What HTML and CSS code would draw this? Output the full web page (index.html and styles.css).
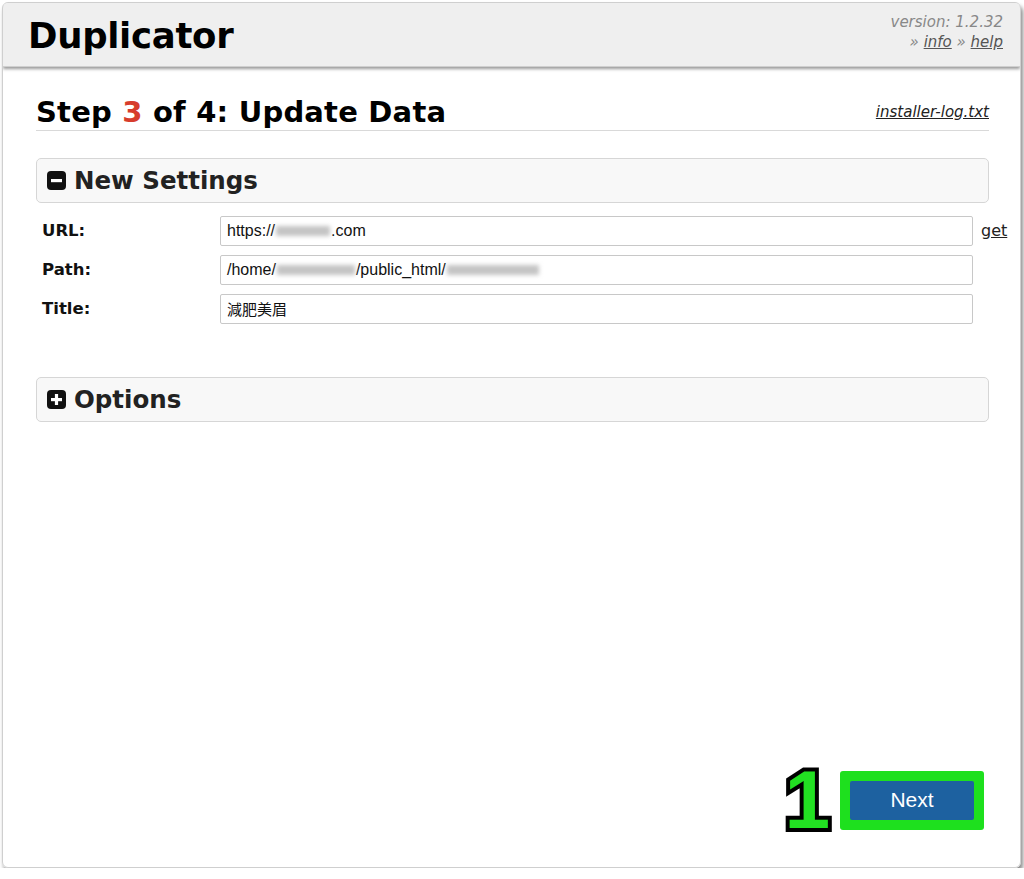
FILE: index.html
```html
<!DOCTYPE html>
<html lang="en">
<head>
    <meta charset="UTF-8">
    <title>Duplicator</title>
    <link rel="stylesheet" href="styles.css">
</head>
<body>
    <div class="frame">
        <div class="header">
            <div class="logo">Duplicator</div>
            <div class="version">
                version: 1.2.32<br>
                &raquo; <a href="#">info</a> &raquo; <a href="#">help</a>
            </div>
        </div>
        <div class="content">
            <div class="step-title">
                <h1>Step <span class="step-num">3</span> of 4: Update Data</h1>
                <a href="#" class="log-link">installer-log.txt</a>
            </div>

            <div class="panel">
                <span class="toggle">
                    <svg width="19" height="19" viewBox="0 0 19 19"><rect x="0" y="0" width="19" height="19" rx="4" fill="#111"/><rect x="4" y="8" width="11" height="3.2" fill="#fff"/></svg>
                </span>
                New Settings
            </div>

            <div class="form">
                <div class="row">
                    <label>URL:</label>
                    <div class="field">https://<span class="blur w56"></span>.com</div>
                    <a href="#" class="get">get</a>
                </div>
                <div class="row">
                    <label>Path:</label>
                    <div class="field">/home/<span class="blur w78"></span>/public_html/<span class="blur w92"></span></div>
                </div>
                <div class="row">
                    <label>Title:</label>
                    <div class="field cjk">減肥美眉</div>
                </div>
            </div>

            <div class="panel options">
                <span class="toggle">
                    <svg width="19" height="19" viewBox="0 0 19 19"><rect x="0" y="0" width="19" height="19" rx="4" fill="#111"/><rect x="4" y="8" width="11" height="3.2" fill="#fff"/><rect x="7.9" y="4" width="3.2" height="11" fill="#fff"/></svg>
                </span>
                Options
            </div>

            <div class="footer">
                <span class="marker">1</span>
                <div class="highlight">
                    <button class="next">Next</button>
                </div>
            </div>
        </div>
    </div>
</body>
</html>
```
FILE: styles.css
```css
body {
    margin: 0;
    background: #fff;
    font-family: "DejaVu Sans", Verdana, sans-serif;
    color: #000;
}
.frame {
    margin: 2px 0 0 2px;
    width: 1017px;
    height: 864px;
    border: 1px solid #cfcfcf;
    border-radius: 6px;
    box-shadow: 2px 4px 4px #8a8a8a;
    display: flex;
    flex-direction: column;
    overflow: hidden;
}
.header {
    height: 63px;
    background: #efefef;
    border-bottom: 1px solid #cfcfcf;
    box-shadow: 0 2px 3px #999;
    display: flex;
    justify-content: space-between;
    align-items: flex-start;
    padding: 0 17px 0 25px;
    position: relative;
}
.logo {
    font-size: 35.5px;
    font-weight: bold;
    margin-top: 12px;
    letter-spacing: -0.3px;
}
.version {
    font-style: italic;
    font-size: 15px;
    color: #888;
    text-align: right;
    line-height: 20px;
    margin-top: 9px;
}
.version a {
    color: #555;
}
.content {
    flex: 1;
    display: flex;
    flex-direction: column;
    padding: 0 31px 0 33px;
}
.step-title {
    display: flex;
    justify-content: space-between;
    align-items: center;
    border-bottom: 1px solid #d9d9d9;
    margin-top: 28px;
}
h1 {
    font-size: 29px;
    margin: 0;
    line-height: 35px;
    letter-spacing: 0.2px;
}
.step-num {
    color: #d73c2c;
}
.log-link {
    font-style: italic;
    font-size: 15px;
    color: #222;
    margin-top: -2px;
}
.panel {
    margin-top: 27px;
    height: 43px;
    border: 1px solid #d6d6d6;
    border-radius: 5px;
    background: #f8f8f8;
    display: flex;
    align-items: center;
    padding-left: 10px;
    font-size: 24.5px;
    font-weight: bold;
    color: #222;
}
.toggle {
    display: flex;
    margin-right: 8px;
}
.form {
    margin-top: 12px;
}
.row {
    display: flex;
    align-items: center;
    height: 31px;
    margin-bottom: 8px;
}
.row label {
    flex-shrink: 0;
    box-sizing: border-box;
    width: 184px;
    padding-left: 6px;
    font-size: 16.5px;
    font-weight: bold;
    color: #111;
}
.field {
    flex-shrink: 0;
    box-sizing: border-box;
    width: 753px;
    height: 30px;
    border: 1px solid #c8c8c8;
    border-radius: 2px;
    background: #fff;
    font-family: "Liberation Sans", Arial, sans-serif;
    font-size: 16px;
    padding-left: 6px;
    color: #111;
    display: flex;
    align-items: center;
}
.field.cjk {
    font-family: "Liberation Sans", "Noto Sans CJK TC", sans-serif;
    font-size: 15px;
}
.blur {
    display: inline-block;
    height: 10px;
    background: #c4c4c4;
    filter: blur(2px);
    margin: 0 1px;
}
.w56 { width: 54px; }
.w78 { width: 78px; }
.w92 { width: 92px; }
.get {
    margin-left: 8px;
    font-size: 16px;
    color: #222;
}
.options {
    margin-top: 45px;
}
.footer {
    margin-top: auto;
    margin-bottom: 34px;
    display: flex;
    justify-content: flex-end;
    align-items: center;
    padding-right: 5px;
}
.marker {
    font-family: "Liberation Sans", Arial, sans-serif;
    font-weight: bold;
    font-size: 82px;
    line-height: 66px;
    color: #22e022;
    -webkit-text-stroke: 8px #000;
    paint-order: stroke fill;
    margin-right: 10px;
}
.highlight {
    background: #1ee01e;
    padding: 10px;
    border-radius: 3px;
}
.next {
    display: block;
    width: 124px;
    height: 39px;
    background: #1d61a0;
    border: none;
    border-radius: 2px;
    color: #fff;
    font-family: "Liberation Sans", Arial, sans-serif;
    font-size: 21px;
}
```
